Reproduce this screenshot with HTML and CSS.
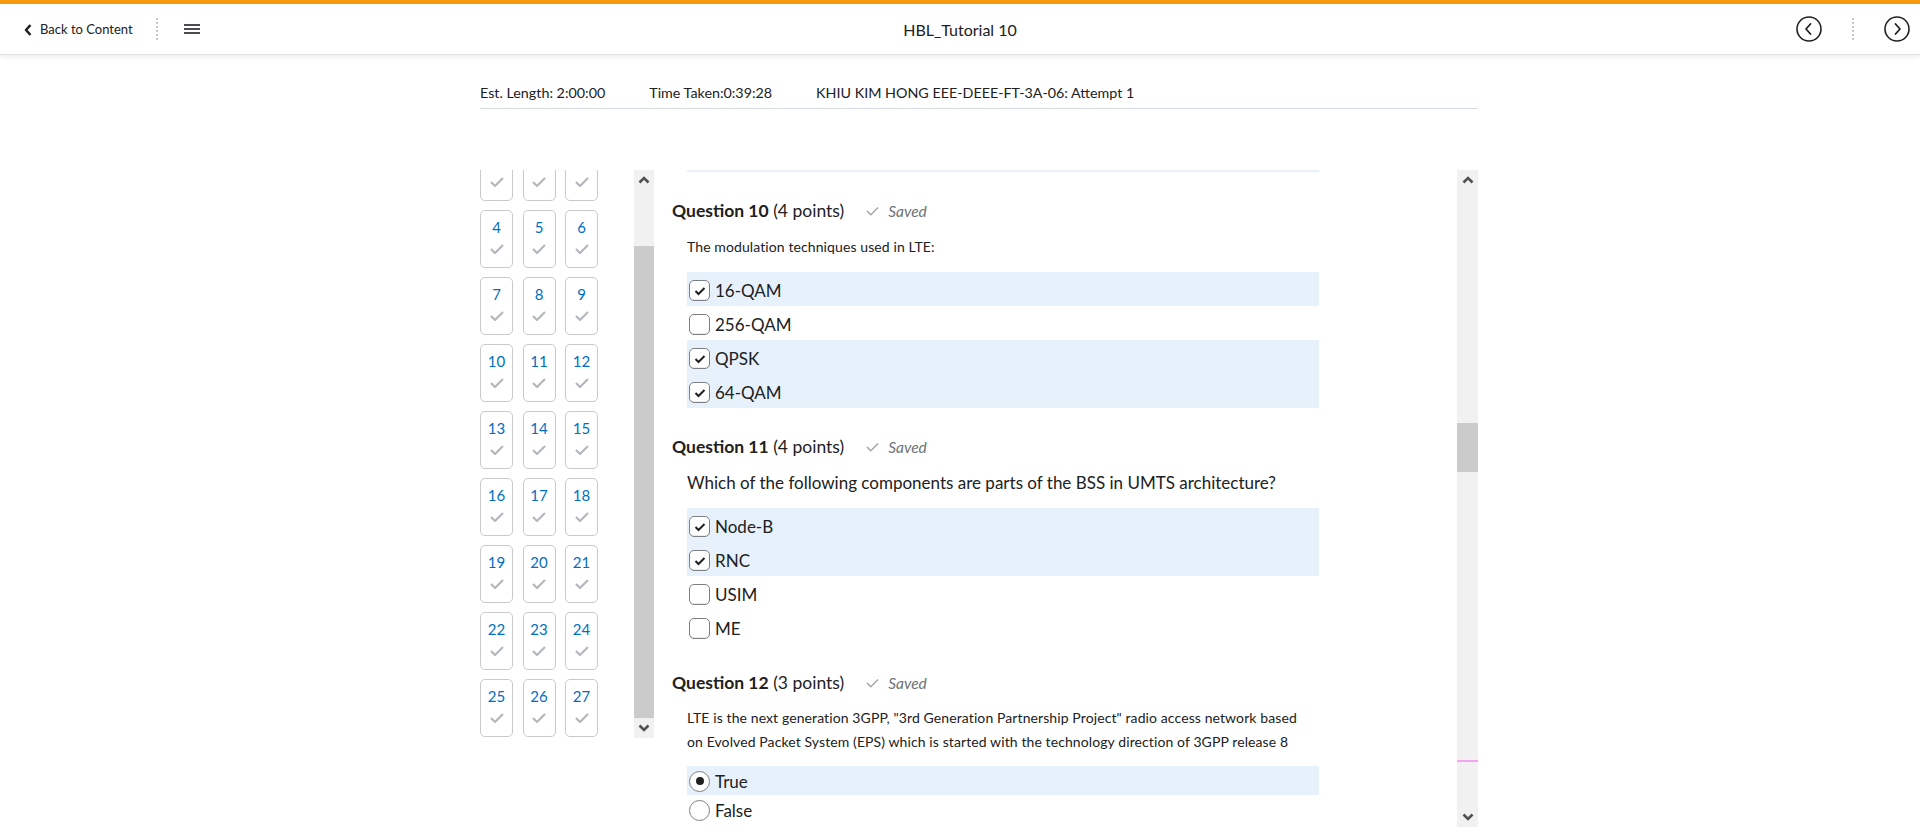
FILE: index.html
```html
<!DOCTYPE html>
<html lang="en">
<head>
<meta charset="utf-8">
<title>HBL_Tutorial 10</title>
<link rel="stylesheet" href="styles.css">
</head>
<body>
<header class="topbar">
  <div class="tb-left">
    <a class="back" href="#">
      <svg class="back-chev" width="8" height="12" viewBox="0 0 8 12"><path d="M6.5 1 L2 6 L6.5 11" fill="none" stroke="#202122" stroke-width="2.6" stroke-linejoin="round"/></svg>
      <span>Back to Content</span>
    </a>
    <span class="vsep"></span>
    <svg class="burger" width="16" height="12" viewBox="0 0 16 12"><rect x="0" y="1" width="16" height="2" fill="#494c4e"/><rect x="0" y="5" width="16" height="2" fill="#494c4e"/><rect x="0" y="9" width="16" height="2" fill="#494c4e"/></svg>
  </div>
  <div class="tb-title">HBL_Tutorial 10</div>
  <div class="tb-right">
    <svg width="28" height="28" viewBox="0 0 28 28"><circle cx="14" cy="14" r="12" fill="none" stroke="#202122" stroke-width="1.6"/><path d="M15.5 9 L11 14 L15.5 19" fill="none" stroke="#202122" stroke-width="1.8" stroke-linecap="round" stroke-linejoin="round"/></svg>
    <span class="vsep"></span>
    <svg width="28" height="28" viewBox="0 0 28 28"><circle cx="14" cy="14" r="12" fill="none" stroke="#202122" stroke-width="1.6"/><path d="M12.5 9 L17 14 L12.5 19" fill="none" stroke="#202122" stroke-width="1.8" stroke-linecap="round" stroke-linejoin="round"/></svg>
  </div>
</header>

<div class="page">
  <div class="info">
    <span>Est. Length: 2:00:00</span>
    <span>Time Taken:0:39:28</span>
    <span>KHIU KIM HONG EEE-DEEE-FT-3A-06: Attempt 1</span>
  </div>

  <div class="body">
    <div class="nav">
      <div class="nav-scroll">
        <div class="nav-grid">
          <div class="tile"><span class="num">1</span><svg class="tck" width="14" height="10" viewBox="0 0 14 10"><path d="M1 5 L5 9 L13 1" fill="none" stroke="#b4b8bc" stroke-width="2.2"/></svg></div>
          <div class="tile"><span class="num">2</span><svg class="tck" width="14" height="10" viewBox="0 0 14 10"><path d="M1 5 L5 9 L13 1" fill="none" stroke="#b4b8bc" stroke-width="2.2"/></svg></div>
          <div class="tile"><span class="num">3</span><svg class="tck" width="14" height="10" viewBox="0 0 14 10"><path d="M1 5 L5 9 L13 1" fill="none" stroke="#b4b8bc" stroke-width="2.2"/></svg></div>
          <div class="tile"><span class="num">4</span><svg class="tck" width="14" height="10" viewBox="0 0 14 10"><path d="M1 5 L5 9 L13 1" fill="none" stroke="#b4b8bc" stroke-width="2.2"/></svg></div>
          <div class="tile"><span class="num">5</span><svg class="tck" width="14" height="10" viewBox="0 0 14 10"><path d="M1 5 L5 9 L13 1" fill="none" stroke="#b4b8bc" stroke-width="2.2"/></svg></div>
          <div class="tile"><span class="num">6</span><svg class="tck" width="14" height="10" viewBox="0 0 14 10"><path d="M1 5 L5 9 L13 1" fill="none" stroke="#b4b8bc" stroke-width="2.2"/></svg></div>
          <div class="tile"><span class="num">7</span><svg class="tck" width="14" height="10" viewBox="0 0 14 10"><path d="M1 5 L5 9 L13 1" fill="none" stroke="#b4b8bc" stroke-width="2.2"/></svg></div>
          <div class="tile"><span class="num">8</span><svg class="tck" width="14" height="10" viewBox="0 0 14 10"><path d="M1 5 L5 9 L13 1" fill="none" stroke="#b4b8bc" stroke-width="2.2"/></svg></div>
          <div class="tile"><span class="num">9</span><svg class="tck" width="14" height="10" viewBox="0 0 14 10"><path d="M1 5 L5 9 L13 1" fill="none" stroke="#b4b8bc" stroke-width="2.2"/></svg></div>
          <div class="tile"><span class="num">10</span><svg class="tck" width="14" height="10" viewBox="0 0 14 10"><path d="M1 5 L5 9 L13 1" fill="none" stroke="#b4b8bc" stroke-width="2.2"/></svg></div>
          <div class="tile"><span class="num">11</span><svg class="tck" width="14" height="10" viewBox="0 0 14 10"><path d="M1 5 L5 9 L13 1" fill="none" stroke="#b4b8bc" stroke-width="2.2"/></svg></div>
          <div class="tile"><span class="num">12</span><svg class="tck" width="14" height="10" viewBox="0 0 14 10"><path d="M1 5 L5 9 L13 1" fill="none" stroke="#b4b8bc" stroke-width="2.2"/></svg></div>
          <div class="tile"><span class="num">13</span><svg class="tck" width="14" height="10" viewBox="0 0 14 10"><path d="M1 5 L5 9 L13 1" fill="none" stroke="#b4b8bc" stroke-width="2.2"/></svg></div>
          <div class="tile"><span class="num">14</span><svg class="tck" width="14" height="10" viewBox="0 0 14 10"><path d="M1 5 L5 9 L13 1" fill="none" stroke="#b4b8bc" stroke-width="2.2"/></svg></div>
          <div class="tile"><span class="num">15</span><svg class="tck" width="14" height="10" viewBox="0 0 14 10"><path d="M1 5 L5 9 L13 1" fill="none" stroke="#b4b8bc" stroke-width="2.2"/></svg></div>
          <div class="tile"><span class="num">16</span><svg class="tck" width="14" height="10" viewBox="0 0 14 10"><path d="M1 5 L5 9 L13 1" fill="none" stroke="#b4b8bc" stroke-width="2.2"/></svg></div>
          <div class="tile"><span class="num">17</span><svg class="tck" width="14" height="10" viewBox="0 0 14 10"><path d="M1 5 L5 9 L13 1" fill="none" stroke="#b4b8bc" stroke-width="2.2"/></svg></div>
          <div class="tile"><span class="num">18</span><svg class="tck" width="14" height="10" viewBox="0 0 14 10"><path d="M1 5 L5 9 L13 1" fill="none" stroke="#b4b8bc" stroke-width="2.2"/></svg></div>
          <div class="tile"><span class="num">19</span><svg class="tck" width="14" height="10" viewBox="0 0 14 10"><path d="M1 5 L5 9 L13 1" fill="none" stroke="#b4b8bc" stroke-width="2.2"/></svg></div>
          <div class="tile"><span class="num">20</span><svg class="tck" width="14" height="10" viewBox="0 0 14 10"><path d="M1 5 L5 9 L13 1" fill="none" stroke="#b4b8bc" stroke-width="2.2"/></svg></div>
          <div class="tile"><span class="num">21</span><svg class="tck" width="14" height="10" viewBox="0 0 14 10"><path d="M1 5 L5 9 L13 1" fill="none" stroke="#b4b8bc" stroke-width="2.2"/></svg></div>
          <div class="tile"><span class="num">22</span><svg class="tck" width="14" height="10" viewBox="0 0 14 10"><path d="M1 5 L5 9 L13 1" fill="none" stroke="#b4b8bc" stroke-width="2.2"/></svg></div>
          <div class="tile"><span class="num">23</span><svg class="tck" width="14" height="10" viewBox="0 0 14 10"><path d="M1 5 L5 9 L13 1" fill="none" stroke="#b4b8bc" stroke-width="2.2"/></svg></div>
          <div class="tile"><span class="num">24</span><svg class="tck" width="14" height="10" viewBox="0 0 14 10"><path d="M1 5 L5 9 L13 1" fill="none" stroke="#b4b8bc" stroke-width="2.2"/></svg></div>
          <div class="tile"><span class="num">25</span><svg class="tck" width="14" height="10" viewBox="0 0 14 10"><path d="M1 5 L5 9 L13 1" fill="none" stroke="#b4b8bc" stroke-width="2.2"/></svg></div>
          <div class="tile"><span class="num">26</span><svg class="tck" width="14" height="10" viewBox="0 0 14 10"><path d="M1 5 L5 9 L13 1" fill="none" stroke="#b4b8bc" stroke-width="2.2"/></svg></div>
          <div class="tile"><span class="num">27</span><svg class="tck" width="14" height="10" viewBox="0 0 14 10"><path d="M1 5 L5 9 L13 1" fill="none" stroke="#b4b8bc" stroke-width="2.2"/></svg></div>
        </div>
      </div>
      <div class="sbar sbar-nav">
        <div class="sb-btn"><svg width="12" height="8" viewBox="0 0 12 8"><path d="M1.5 6.5 L6 2 L10.5 6.5" fill="none" stroke="#505050" stroke-width="2.6"/></svg></div>
        <div class="sb-track"><div class="sb-gap nav-gap-top"></div><div class="sb-thumb nav-thumb"></div></div>
        <div class="sb-btn"><svg width="12" height="8" viewBox="0 0 12 8"><path d="M1.5 1.5 L6 6 L10.5 1.5" fill="none" stroke="#505050" stroke-width="2.6"/></svg></div>
      </div>
    </div>

    <div class="main">
      <div class="main-scroll">
        <div class="qlist">
          <div class="remnant"></div>

          <section class="question">
            <h2 class="qhead"><strong>Question 10</strong> (4 points)<span class="saved"><svg width="13" height="10" viewBox="0 0 13 10"><path d="M1 5 L4.8 8.8 L12 1.5" fill="none" stroke="#a2a6aa" stroke-width="1.5"/></svg><em>Saved</em></span></h2>
            <p class="qtext small">The modulation techniques used in LTE:</p>
            <div class="opts">
              <div class="opt on"><span class="cb checked"><svg width="12" height="10" viewBox="0 0 12 10"><path d="M1.5 5 L4.5 8 L10.5 2" fill="none" stroke="#202122" stroke-width="2"/></svg></span><span>16-QAM</span></div>
              <div class="opt"><span class="cb"></span><span>256-QAM</span></div>
              <div class="opt on"><span class="cb checked"><svg width="12" height="10" viewBox="0 0 12 10"><path d="M1.5 5 L4.5 8 L10.5 2" fill="none" stroke="#202122" stroke-width="2"/></svg></span><span>QPSK</span></div>
              <div class="opt on"><span class="cb checked"><svg width="12" height="10" viewBox="0 0 12 10"><path d="M1.5 5 L4.5 8 L10.5 2" fill="none" stroke="#202122" stroke-width="2"/></svg></span><span>64-QAM</span></div>
            </div>
          </section>

          <section class="question">
            <h2 class="qhead"><strong>Question 11</strong> (4 points)<span class="saved"><svg width="13" height="10" viewBox="0 0 13 10"><path d="M1 5 L4.8 8.8 L12 1.5" fill="none" stroke="#a2a6aa" stroke-width="1.5"/></svg><em>Saved</em></span></h2>
            <p class="qtext big">Which of the following components are parts of the BSS in UMTS architecture?</p>
            <div class="opts">
              <div class="opt on"><span class="cb checked"><svg width="12" height="10" viewBox="0 0 12 10"><path d="M1.5 5 L4.5 8 L10.5 2" fill="none" stroke="#202122" stroke-width="2"/></svg></span><span>Node-B</span></div>
              <div class="opt on"><span class="cb checked"><svg width="12" height="10" viewBox="0 0 12 10"><path d="M1.5 5 L4.5 8 L10.5 2" fill="none" stroke="#202122" stroke-width="2"/></svg></span><span>RNC</span></div>
              <div class="opt"><span class="cb"></span><span>USIM</span></div>
              <div class="opt"><span class="cb"></span><span>ME</span></div>
            </div>
          </section>

          <section class="question">
            <h2 class="qhead"><strong>Question 12</strong> (3 points)<span class="saved"><svg width="13" height="10" viewBox="0 0 13 10"><path d="M1 5 L4.8 8.8 L12 1.5" fill="none" stroke="#a2a6aa" stroke-width="1.5"/></svg><em>Saved</em></span></h2>
            <p class="qtext small long">LTE is the next generation 3GPP, "3rd Generation Partnership Project" radio access network based on Evolved Packet System (EPS) which is started with the technology direction of 3GPP release 8</p>
            <div class="opts">
              <div class="opt radio on"><span class="rb sel"></span><span>True</span></div>
              <div class="opt radio"><span class="rb"></span><span>False</span></div>
            </div>
          </section>
        </div>
      </div>
      <div class="sbar sbar-main">
        <div class="sb-btn"><svg width="12" height="8" viewBox="0 0 12 8"><path d="M1.5 6.5 L6 2 L10.5 6.5" fill="none" stroke="#505050" stroke-width="2.6"/></svg></div>
        <div class="sb-track"><div class="sb-gap main-gap-top"></div><div class="sb-thumb main-thumb"></div><div class="sb-gap main-gap-mid"></div><div class="sb-mark"></div></div>
        <div class="sb-btn"><svg width="12" height="8" viewBox="0 0 12 8"><path d="M1.5 1.5 L6 6 L10.5 1.5" fill="none" stroke="#505050" stroke-width="2.6"/></svg></div>
      </div>
    </div>
  </div>
</div>
</body>
</html>
```

FILE: styles.css
```css
* { box-sizing: border-box; }
html, body { margin: 0; padding: 0; background: #fff; }
body {
  font-family: Lato, "Noto Sans", "Liberation Sans", sans-serif;
  color: #202122;
  height: 838px;
  overflow: hidden;
}

/* ---------- top bar ---------- */
.topbar {
  height: 55px;
  border-top: 4px solid #f59a0e;
  border-bottom: 1px solid #dfe1e3;
  box-shadow: 0 2px 5px rgba(0,0,0,0.07);
  display: flex;
  align-items: center;
  justify-content: space-between;
  position: relative;
}
.tb-left { display: flex; align-items: center; padding-left: 24px; }
.back {
  display: flex; align-items: center; gap: 8px;
  color: #202122; text-decoration: none; font-size: 13px;
}
.back-chev { margin-top: 1px; }
.vsep {
  display: inline-block;
  width: 2px; height: 22px;
  background: repeating-linear-gradient(to bottom, #c3c7cb 0 2px, transparent 2px 4px);
}
.tb-left .vsep { margin-left: 23px; }
.burger { margin-left: 26px; }
.tb-title {
  position: absolute; left: 0; right: 0; text-align: center;
  font-size: 16px; pointer-events: none; color: #202122;
}
.tb-right { display: flex; align-items: center; gap: 29px; padding-right: 9px; }

/* ---------- page ---------- */
.page { margin-left: 480px; width: 998px; }
.info {
  display: flex; gap: 44px;
  font-size: 14.3px;
  padding-top: 29px;
  height: 54px;
  border-bottom: 1px solid #d7dde6;
}

.body { display: flex; margin-top: 61px; align-items: flex-start; }

/* ---------- nav ---------- */
.nav { display: flex; width: 174px; }
.nav-scroll { width: 154px; height: 568px; overflow: hidden; }
.nav-grid {
  display: grid;
  grid-template-columns: repeat(3, 33px);
  column-gap: 9.5px;
  row-gap: 9px;
  margin-top: -27px;
}
.tile {
  height: 58px;
  border: 1px solid #c6cacf;
  border-radius: 5px;
  display: flex; flex-direction: column; align-items: center;
}
.num { color: #006fbf; font-size: 15px; line-height: 18px; margin-top: 7px; }
.tck { margin-top: 8px; }

/* ---------- scrollbars ---------- */
.sbar {
  display: flex; flex-direction: column;
  background: #f1f1f1;
  flex: none;
}
.sbar-nav { width: 20px; height: 568px; }
.sbar-main { width: 21px; height: 657px; }
.sb-btn { height: 20px; display: flex; align-items: center; justify-content: center; flex: none; }
.sb-track { flex: 1; display: flex; flex-direction: column; }
.sb-thumb { background: #cbcbcb; }
.nav-gap-top { height: 56px; }
.nav-thumb { height: 472px; }
.main-gap-top { height: 233px; }
.main-thumb { height: 49px; }
.main-gap-mid { height: 288px; }
.sb-mark { height: 2px; background: #f0a6f0; }

/* ---------- main ---------- */
.main { display: flex; width: 824px; }
.main-scroll { width: 803px; height: 657px; overflow: hidden; padding-left: 18px; }
.qlist { width: 647px; }
.remnant { height: 2px; margin-left: 15px; background: #e7f1fb; }
.question { margin-top: 28px; }
.qhead {
  margin: 0; font-size: 17.5px; line-height: 22px; font-weight: 400;
  display: flex; align-items: center; white-space: pre;
}
.qhead strong { font-weight: 700; }
.saved { display: inline-flex; align-items: center; gap: 9px; margin-left: 22px; color: #6e7376; font-size: 15.5px; }
.qtext { margin: 12px 0 13px 15px; line-height: 25px; }
.qtext.small { font-size: 14px; letter-spacing: 0.1px; }
.qtext.long { letter-spacing: 0.1px; line-height: 24px; margin: 12px 16px 12px 15px; }
.qtext.big { font-size: 17px; }
.opts { margin-left: 15px; }
.opt {
  height: 34px; display: flex; align-items: center; gap: 5px;
  font-size: 17px; padding: 3px 0 0 2px;
}
.opt.radio { height: 29px; padding-top: 1px; }
.opt.on { background: #e7f1fb; }
.cb {
  width: 21px; height: 21px; flex: none;
  border: 1px solid #7c8084; border-radius: 5px; background: #fff;
  display: flex; align-items: center; justify-content: center;
  box-shadow: inset 0 -1px 0 rgba(0,0,0,0.08);
}
.rb {
  width: 21px; height: 21px; flex: none;
  border: 1px solid #7c8084; border-radius: 50%; background: #fff;
  display: flex; align-items: center; justify-content: center;
}
.rb.sel::after { content: ""; width: 8px; height: 8px; border-radius: 50%; background: #202122; }
```
